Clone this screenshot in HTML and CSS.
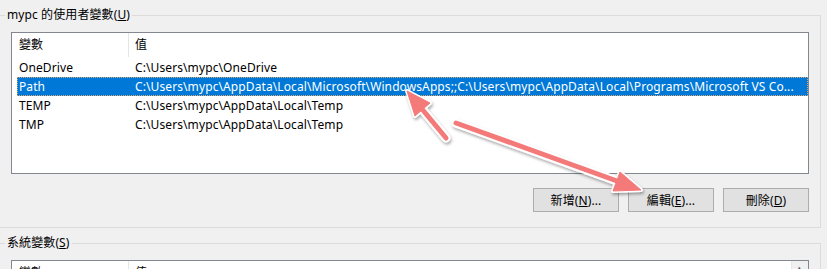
FILE: index.html
```html
<!DOCTYPE html>
<html lang="zh-Hant">
<head>
    <meta charset="UTF-8">
    <title>環境變數</title>
    <link rel="stylesheet" href="styles.css">
</head>
<body>
<div class="window">

    <fieldset class="group">
        <legend>mypc 的使用者變數(<u>U</u>)</legend>
        <div class="list">
            <div class="list-head">
                <div class="head-name">變數</div>
                <div class="head-value">值</div>
            </div>
            <div class="row"><span class="cell-name">OneDrive</span><span class="cell-value">C:\Users\mypc\OneDrive</span></div>
            <div class="row selected"><span class="cell-name">Path</span><span class="cell-value">C:\Users\mypc\AppData\Local\Microsoft\WindowsApps;;C:\Users\mypc\AppData\Local\Programs\Microsoft VS Co...</span></div>
            <div class="row"><span class="cell-name">TEMP</span><span class="cell-value">C:\Users\mypc\AppData\Local\Temp</span></div>
            <div class="row"><span class="cell-name">TMP</span><span class="cell-value">C:\Users\mypc\AppData\Local\Temp</span></div>
        </div>
        <div class="buttons">
            <button>新增(<u>N</u>)...</button>
            <button>編輯(<u>E</u>)...</button>
            <button>刪除(<u>D</u>)</button>
        </div>
    </fieldset>

    <fieldset class="group">
        <legend>系統變數(<u>S</u>)</legend>
        <div class="list list-system">
            <div class="list-main">
                <div class="list-head">
                    <div class="head-name">變數</div>
                    <div class="head-value">值</div>
                </div>
            </div>
            <div class="scrollbar"><span class="scroll-up">&#x25B4;</span></div>
        </div>
    </fieldset>

    <!-- annotation arrows drawn over the dialog -->
    <svg class="arrows" width="827" height="269" viewBox="0 0 827 269">
        <defs>
            <filter id="shadow" x="-20%" y="-20%" width="140%" height="140%">
                <feDropShadow dx="1" dy="2" stdDeviation="1.5" flood-color="#000" flood-opacity="0.35"/>
            </filter>
        </defs>
        <g filter="url(#shadow)">
            <g class="outline">
                <line x1="446" y1="138" x2="422" y2="109"/>
                <polygon points="407,91 430,103 415,116"/>
                <line x1="456" y1="123" x2="617" y2="181"/>
                <polygon points="641,190 613,191 620,172"/>
            </g>
            <g class="fill">
                <line x1="446" y1="138" x2="422" y2="109"/>
                <polygon points="407,91 430,103 415,116"/>
                <line x1="456" y1="123" x2="617" y2="181"/>
                <polygon points="641,190 613,191 620,172"/>
            </g>
        </g>
    </svg>

</div>
</body>
</html>
```

FILE: styles.css
```css
* {
    box-sizing: border-box;
}

html, body {
    margin: 0;
    height: 100%;
}

body {
    background-color: #f0f0f0;
    font-family: "Noto Sans", "Noto Sans CJK TC", sans-serif;
    font-size: 12px;
    letter-spacing: 0.1px;
    color: #000;
    overflow: hidden;
}

.window {
    position: relative;
    width: 827px;
    height: 269px;
    overflow: hidden;
}

/* Group boxes */
.group {
    width: 822px;
    margin: 7px 0 0 -1px;
    padding: 9px 11px 15px 11px;
    border: 1px solid #dcdcdc;
    min-width: 0;
}

.group legend {
    padding: 0 2px;
    margin-left: -6px;
    line-height: 16px;
}

/* List views */
.list {
    height: 142px;
    background-color: #fff;
    border: 1px solid #828790;
    padding-left: 5px;
    overflow: hidden;
}

.list-head {
    display: flex;
    height: 25px;
    line-height: 23px;
}

.head-name {
    width: 112px;
    padding-left: 2px;
    border-right: 1px solid #e5e5e5;
    height: 24px;
}

.head-value {
    padding-left: 6px;
}

.row {
    display: flex;
    height: 19px;
    line-height: 19px;
    white-space: nowrap;
}

.cell-name {
    width: 116px;
    flex: none;
    padding-left: 2px;
}

.cell-value {
    padding-left: 2px;
    overflow: hidden;
    text-overflow: ellipsis;
}

.row.selected {
    background-color: #0078d7;
    color: #fff;
    outline: 1px dotted rgba(255, 176, 96, 0.85);
    outline-offset: -1px;
}

/* Buttons */
.buttons {
    display: flex;
    justify-content: flex-end;
    gap: 9px;
    margin-top: 14px;
}

button {
    width: 86px;
    height: 24px;
    padding: 0;
    background-color: #e1e1e1;
    border: 1px solid #adadad;
    font-family: inherit;
    font-size: 12px;
    letter-spacing: inherit;
    color: #000;
}

/* System variables list (cut off by window) */
.list-system {
    display: flex;
    padding-left: 0;
}

.list-main {
    flex: 1;
    padding-left: 5px;
}

.scrollbar {
    width: 17px;
    background-color: #f0f0f0;
    border-left: 1px solid #e6e6e6;
    text-align: center;
}

.scroll-up {
    display: block;
    font-size: 9px;
    line-height: 14px;
    color: #606060;
}

/* Annotation arrows */
.arrows {
    position: absolute;
    top: 0;
    left: 0;
    pointer-events: none;
}

.arrows .outline line {
    stroke: #fff;
    stroke-width: 9;
    stroke-linecap: round;
}

.arrows .outline polygon {
    fill: #fff;
    stroke: #fff;
    stroke-width: 4;
    stroke-linejoin: round;
}

.arrows .fill line {
    stroke: #f47a7a;
    stroke-width: 5;
    stroke-linecap: round;
}

.arrows .fill polygon {
    fill: #f47a7a;
    stroke: #f47a7a;
    stroke-width: 1;
    stroke-linejoin: round;
}
```
